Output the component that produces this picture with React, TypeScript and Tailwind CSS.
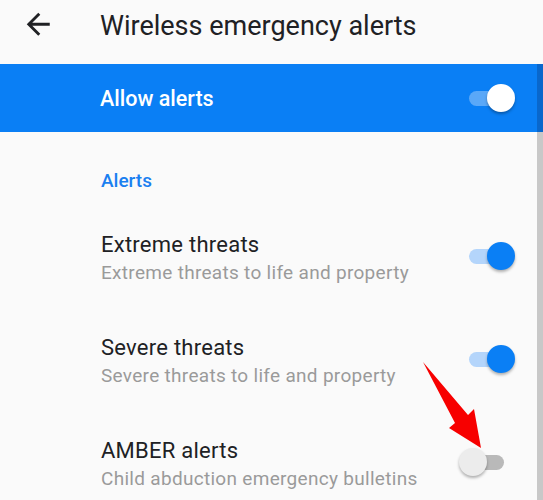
import React from "react";

function Switch({ on, dark }: { on: boolean; dark?: boolean }) {
  const track = dark ? "bg-[#5aa8f8]" : on ? "bg-[#b4d5fb]" : "bg-[#b9b9b9]";
  const thumb = dark ? "bg-white" : on ? "bg-[#0a7ff5]" : "bg-[#ececec]";
  return (
    <div className={`relative w-[35px] h-[15px] rounded-full ${track}`}>
      <div
        className={`absolute top-[-6.5px] w-[28px] h-[28px] rounded-full ${thumb} shadow-[0_2px_3px_rgba(0,0,0,0.3)] ${
          on ? "left-[18px]" : "left-[-10.5px]"
        }`}
      />
    </div>
  );
}

function Row({ title, sub, on }: { title: string; sub: string; on: boolean }) {
  return (
    <div className="flex h-[103px] items-start pl-[101px] pr-[33px]">
      <div className="flex-1">
        <div className="text-[22px] leading-[28px] tracking-[0.25px] text-[#202124]">{title}</div>
        <div className="text-[19px] leading-[28px] tracking-[0.3px] text-[#9a9a9a]">{sub}</div>
      </div>
      <div className="mt-[18px]">
        <Switch on={on} />
      </div>
    </div>
  );
}

export default function App() {
  return (
    <div
      className="relative w-[543px] h-[500px] overflow-hidden bg-[#fafafa]"
      style={{ fontFamily: "Roboto, 'Noto Sans', sans-serif" }}
    >
      <div className="h-[64px] flex items-start">
        <svg
          width="34.5"
          height="34.5"
          viewBox="0 0 24 24"
          className="ml-[21px] mt-[7px]"
        >
          <path
            d="M20 11H7.83l5.59-5.59L12 4l-8 8 8 8 1.41-1.41L7.83 13H20v-2z"
            fill="#202124"
          />
        </svg>
        <div className="ml-[44.5px] mt-[6px] text-[27px] leading-[40px] text-[#202124]">
          Wireless emergency alerts
        </div>
      </div>
      <div className="flex h-[436px]">
        <div className="flex-1">
          <div className="h-[68px] bg-[#0a7ff5] flex items-center pl-[100px] pr-[33px]">
            <div className="flex-1 pt-[2px] text-[21.5px] font-medium leading-[30px] text-white">
              Allow alerts
            </div>
            <Switch on={true} dark />
          </div>
          <div className="pt-[36.5px] pl-[101px] text-[19px] font-medium leading-[24px] text-[#1a7ff0]">
            Alerts
          </div>
          <div className="mt-[38px]">
            <Row title="Extreme threats" sub="Extreme threats to life and property" on={true} />
            <Row title="Severe threats" sub="Severe threats to life and property" on={true} />
            <Row title="AMBER alerts" sub="Child abduction emergency bulletins" on={false} />
          </div>
        </div>
        <div className="w-[6px] flex flex-col">
          <div className="h-[68px] bg-[#0967cc]" />
          <div className="flex-1 bg-[#c8c8c8]" />
        </div>
      </div>
      <svg
        className="absolute inset-0 pointer-events-none"
        width="543"
        height="500"
        viewBox="0 0 543 500"
      >
        <polygon
          points="423,362 468,415 474,409 481,448 449,428 455,423"
          fill="#f70000"
        />
      </svg>
    </div>
  );
}
